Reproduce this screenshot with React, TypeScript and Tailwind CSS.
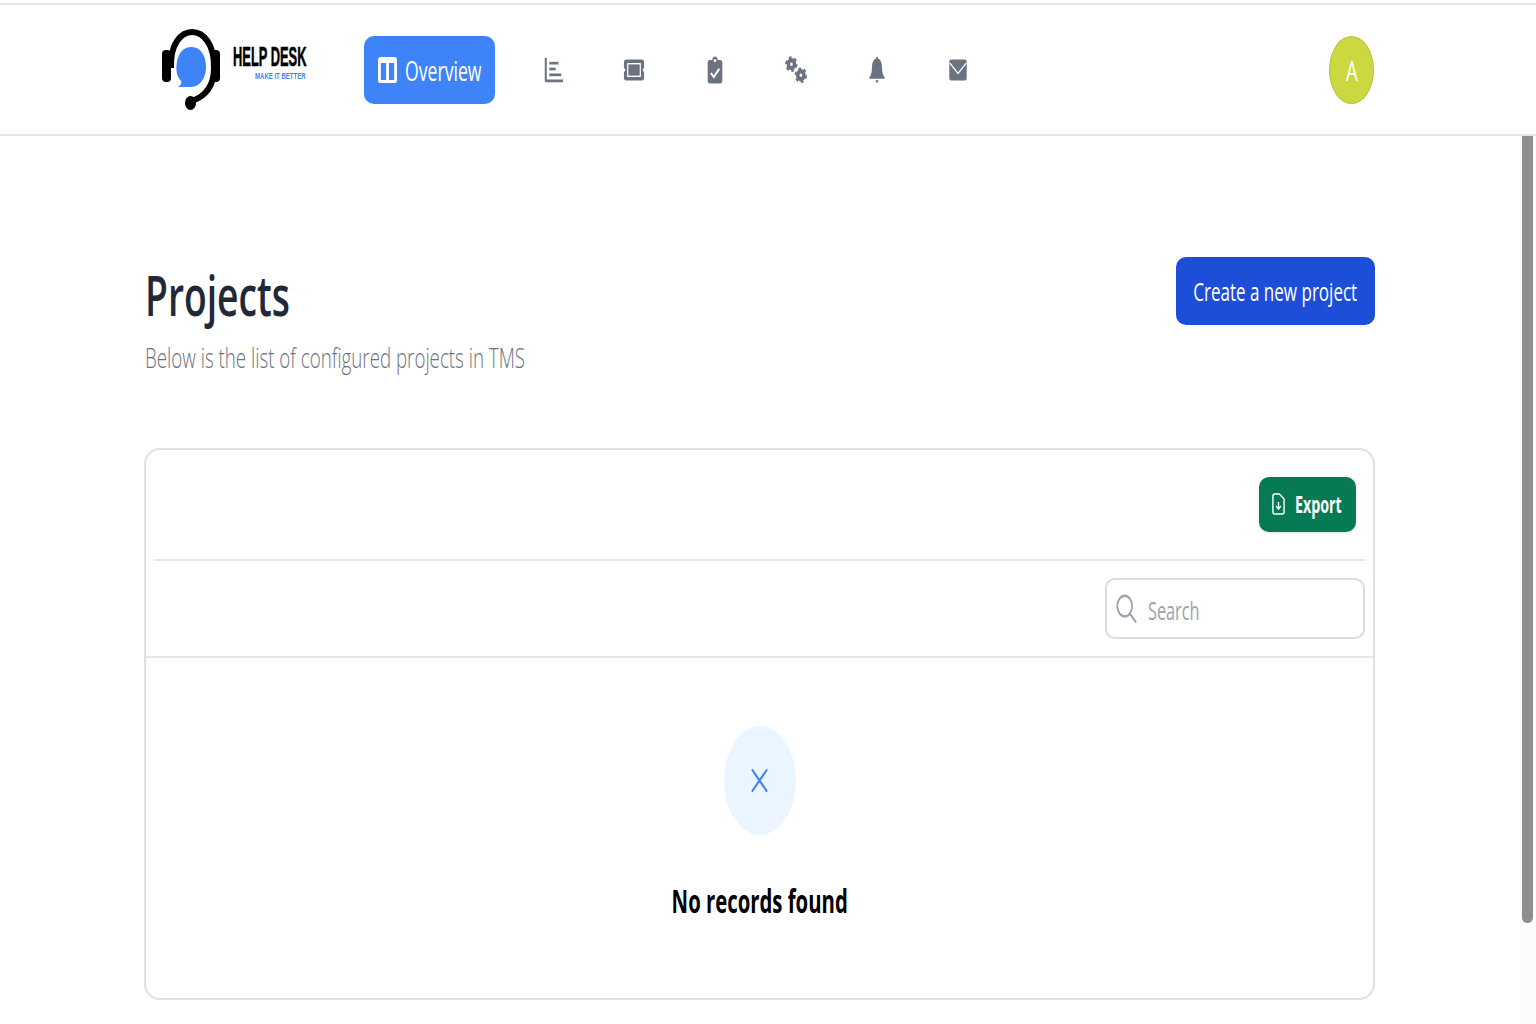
import React from 'react';

const iconClass = 'w-[22px] h-[28px] text-[#6b7280]';

// The reference is squeezed horizontally, so icons stretch to their box
const Icon: React.FC<{ className?: string; children: React.ReactNode }> = ({ className = iconClass, children }) => (
  <svg viewBox="0 0 24 24" preserveAspectRatio="none" className={className} fill="currentColor">
    {children}
  </svg>
);

const Gear: React.FC<{ cx: number; cy: number }> = ({ cx, cy }) => (
  <g>
    <circle cx={cx} cy={cy} r="3.4" fill="none" stroke="currentColor" strokeWidth="3.8" />
    <circle cx={cx} cy={cy} r="5.8" fill="none" stroke="currentColor" strokeWidth="1.8" strokeDasharray="3.04 3.03" />
  </g>
);

const navIcons = [
  <Icon key="chart">
    <path d="M3 1.5h2.2v18.6H23V22.500H4.500A1.500 1.500 0 0 1 3 21z" />
    <rect x="8" y="5" width="10" height="2.300" />
    <rect x="8" y="10" width="7" height="2.300" />
    <rect x="8" y="15" width="13" height="2.300" />
  </Icon>,
  <Icon key="ticket">
    <path d="M3.500 3h17A2.500 2.500 0 0 1 23 5.500V10.500a1.500 1.500 0 0 0 0 3v5a2.500 2.500 0 0 1-2.500 2.500h-17A2.500 2.500 0 0 1 1 18.500v-5a1.500 1.500 0 0 0 0-3V5.500A2.500 2.500 0 0 1 3.500 3z" />
    <rect x="4.500" y="6" width="15" height="12" fill="#fff" />
    <rect x="5.800" y="7.200" width="12.400" height="9.600" fill="#6b7280" />
  </Icon>,
  <Icon key="clipboard">
    <path d="M9 3.500C9 1.500 10.500 0.500 12 0.500s3 1 3 3h2.500A2.500 2.500 0 0 1 20 6v15a2.500 2.500 0 0 1-2.500 2.500h-11A2.500 2.500 0 0 1 4 21V6a2.500 2.500 0 0 1 2.500-2.500z" />
    <ellipse cx="12" cy="3.800" rx="1.500" ry="1.300" fill="#fff" />
    <path d="M7.500 14.500l3.200 3.500 6-7" fill="none" stroke="#fff" strokeWidth="2" />
  </Icon>,
  <Icon key="cogs">
    <Gear cx={7} cy={7} />
    <Gear cx={17.300} cy={16.500} />
  </Icon>,
  <Icon key="bell">
    <g transform="translate(1.800 0) scale(0.85 1)">
      <path d="M12 0.500c.8 0 1.200.6 1.200 1.600C17 3 18.300 6 18.500 10c.2 4 1 6.500 3.300 8.300v1.200H2.200v-1.200C4.500 16.500 5.300 14 5.500 10c.2-4 1.500-7 5.300-7.900 0-1 .4-1.600 1.200-1.600z" />
      <path d="M9.800 20.800h4.400L12 23.500z" />
    </g>
  </Icon>,
  <Icon key="mail">
    <rect x="2.500" y="3" width="19" height="18" rx="2" />
    <path d="M3 6l9 9 9-9" fill="none" stroke="#fff" strokeWidth="1.300" />
  </Icon>,
];

const Logo = () => (
  <div className="w-[204px] h-[88px] flex items-center">
    <svg viewBox="160 26 62 88" className="w-[62px] h-[88px] shrink-0">
      <path d="M171 68C169 20 215 20 214 68C214 85 206 96 192 101" fill="none" stroke="#000" strokeWidth="6" />
      <rect x="162" y="50" width="9" height="32" rx="4" fill="#000" />
      <rect x="211" y="50" width="9" height="32" rx="4" fill="#000" />
      <ellipse cx="190.500" cy="103" rx="5.500" ry="7" fill="#000" />
      <path d="M191.500 47C201 47 206 56 206 67C206 78 200 87 191 87H178C181 85 182 83 181 81C177 76 176 72 176.500 66C177 55 182 47 191.500 47Z" fill="#3f83f8" />
    </svg>
    <div className="ml-[11px] mt-[-16px] flex flex-col">
      <span className="block whitespace-nowrap origin-left scale-x-[0.46] font-['Liberation_Sans',sans-serif] font-bold text-[28px] leading-[28px] text-black [-webkit-text-stroke:0.6px_#000]">
        HELP DESK
      </span>
      <span className="block ml-[22px] whitespace-nowrap origin-left scale-x-[0.67] font-['Liberation_Sans',sans-serif] font-bold text-[9px] leading-[10px] text-[#3f83f8]">
        MAKE IT BETTER
      </span>
    </div>
  </div>
);

export default function App() {
  return (
    <div className="h-[1024px] overflow-hidden bg-white font-['Open_Sans',sans-serif]">
      {/* Top bar */}
      <header className="mt-[3px] h-[133px] border-y-2 border-[#e5e7eb] flex items-center pl-[160px]">
        <Logo />
        <button className="w-[131px] h-[68px] rounded-[10px] bg-[#3f83f8] flex items-center justify-center text-white">
          <svg viewBox="0 0 20 26" preserveAspectRatio="none" className="w-[19px] h-[26px] mr-[8px] shrink-0">
            <rect x="0" y="0" width="20" height="26" rx="2.500" fill="#fff" />
            <rect x="3" y="6" width="5.500" height="17" fill="#3f83f8" />
            <rect x="11.500" y="6" width="5.500" height="17" fill="#3f83f8" />
          </svg>
          <span className="block w-[77px] whitespace-nowrap origin-left scale-x-[0.63] text-[28px] leading-[36px] font-medium">Overview</span>
        </button>
        <nav className="flex ml-[38px] w-[445px] justify-between">
          {navIcons.map((icon, i) => (
            <div key={i} className="w-[40px] h-[40px] flex items-center justify-center">
              {icon}
            </div>
          ))}
        </nav>
        <div className="ml-auto mr-[162px] w-[45px] h-[68px] rounded-[50%] bg-[#cbd83f] border border-[#b5c23a] flex items-center justify-center text-white text-[28px]">
          <span className="block scale-x-[0.66]">A</span>
        </div>
      </header>

      <div className="flex h-[888px]">
        <main className="flex-1 pl-[145px] pr-[145px]">
          <div className="mt-[121px] h-[191px] flex justify-between items-start">
            <div>
              <h1 className="mt-[4px] whitespace-nowrap origin-left scale-x-[0.665] text-[56px] leading-[66px] font-semibold text-[#1f2937]">
                Projects
              </h1>
              <p className="mt-[11px] whitespace-nowrap origin-left scale-x-[0.669] text-[28px] leading-[38px] font-light text-[#6b7280]">
                Below is the list of configured projects in TMS
              </p>
            </div>
            <button className="w-[199px] h-[68px] rounded-[10px] bg-[#1d4ed8] flex items-center justify-center text-white">
              <span className="block whitespace-nowrap scale-x-[0.655] text-[26px] leading-[36px]">Create a new project</span>
            </button>
          </div>

          <section className="-ml-[1px] h-[552px] rounded-[16px] border-2 border-[#dfe1e6] flex flex-col">
            <div className="mx-[8px] h-[111px] border-b-2 border-[#e5e7eb] flex items-center justify-end pb-[1px] pr-[9px]">
              <button className="w-[97px] h-[55px] rounded-[10px] bg-[#057a55] flex items-center justify-center gap-[10px] text-white shadow-sm">
                <svg viewBox="0 0 14 22" preserveAspectRatio="none" className="w-[13px] h-[22px] shrink-0" fill="none" stroke="#fff" strokeWidth="1.500">
                  <path d="M1 3a2 2 0 0 1 2-2h5l5 5v13a2 2 0 0 1-2 2H3a2 2 0 0 1-2-2z" />
                  <path d="M7 9v6M4.500 13L7 16l2.500-3" />
                </svg>
                <span className="block w-[48px] whitespace-nowrap origin-left scale-x-[0.62] text-[23px] leading-[32px] font-bold">Export</span>
              </button>
            </div>
            <div className="h-[97px] border-b-2 border-[#e5e7eb] flex items-center justify-end pr-[8px]">
              <div className="w-[260px] h-[61px] rounded-[10px] border-2 border-[#d9dce3] flex items-center pl-[9px] gap-[11px]">
                <svg viewBox="0 0 24 24" preserveAspectRatio="none" className="w-[21px] h-[29px] shrink-0" fill="none" stroke="#9ca3af" strokeWidth="2">
                  <circle cx="10" cy="10" r="8.500" />
                  <path d="M16 16.500l7 7" />
                </svg>
                <span className="block mt-[3px] whitespace-nowrap origin-left scale-x-[0.65] text-[25px] leading-[34px] text-[#9ca3af]">Search</span>
              </div>
            </div>
            <div className="flex flex-col items-center pt-[68px]">
              <div className="w-[72px] h-[109px] rounded-[50%] bg-[#ebf5ff] flex items-center justify-center">
                <svg viewBox="0 0 24 24" preserveAspectRatio="none" className="w-[17px] h-[25px]" fill="none" stroke="#3f83f8" strokeWidth="2.500" strokeLinecap="round">
                  <path d="M2 2l20 20M22 2L2 22" />
                </svg>
              </div>
              <p className="mt-[44px] whitespace-nowrap scale-x-[0.635] text-[32px] leading-[44px] font-bold text-black">No records found</p>
            </div>
          </section>
        </main>

        {/* Page scrollbar */}
        <div className="w-[16px] bg-[#fcfcfc] pl-[2px] pr-[3px]">
          <div className="h-[787px] rounded-b-[6px] bg-[#8e8e8e]" />
        </div>
      </div>
    </div>
  );
}
